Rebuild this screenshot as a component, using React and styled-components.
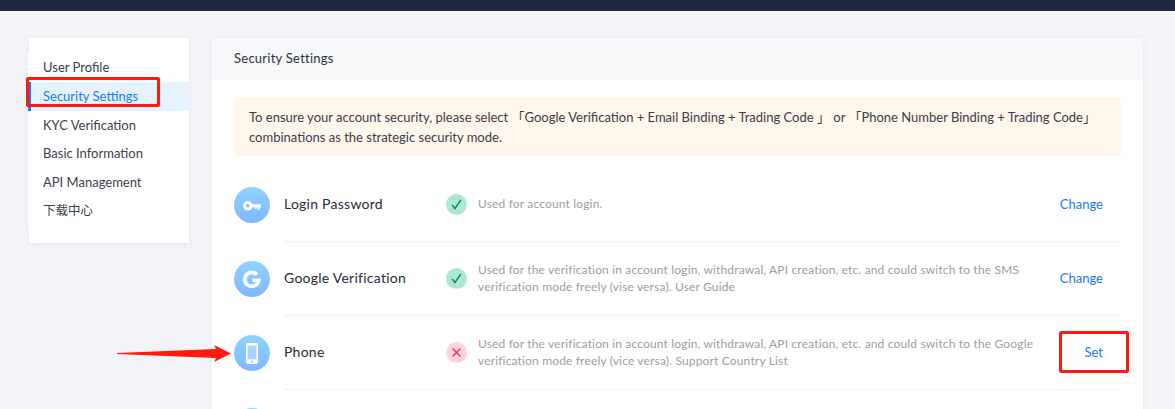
import React from 'react'
import styled, { createGlobalStyle, css } from 'styled-components'

const GlobalStyle = createGlobalStyle`
    html, body {
        margin: 0;
        height: 409px;
        overflow: hidden;
        background-color: #f3f4f8;
        font-family: Lato, "Noto Sans CJK SC", sans-serif;
    }
`

// row texts sit 1px above the badge and icon centre
const rowText = css`
    margin-bottom: 2px;
`

const Page = styled.div`
    position: relative;
    width: 1175px;
    height: 409px;
    overflow: hidden;
`
const TopBar = styled.div`
    height: 11px;
    background-color: #1f2640;
`
const Content = styled.div`
    display: flex;
    align-items: flex-start;
    gap: 23px;
    padding: 27px 32px 0 29px;
`
const Sidebar = styled.nav`
    width: 160px;
    height: 205px;
    box-sizing: border-box;
    flex-shrink: 0;
    padding-top: 15px;
    background-color: #fff;
    box-shadow: 0 1px 6px rgba(40, 50, 80, 0.07);
`
const NavItem = styled.div`
    height: 28.8px;
    line-height: 28.8px;
    margin-left: -1px;
    padding-left: 15px;
    font-size: ${p => p.$cjk ? '12.5px' : '13px'};
    color: ${p => p.$active ? '#1a7bf2' : '#3c3f4c'};
    background-color: ${p => p.$active ? '#e5f3ff' : '#fff'};
    box-shadow: ${p => p.$active ? 'inset 3px 0 0 #1a7bf2' : 'none'};
`
const Main = styled.main`
    flex: 1;
    background-color: #fff;
    border-radius: 4px 4px 0 0;
    box-shadow: 0 1px 6px rgba(40, 50, 80, 0.05);
`
const CardHeader = styled.div`
    height: 42px;
    line-height: 41px;
    padding-left: 22px;
    font-size: 13px;
    letter-spacing: 0.25px;
    color: #2b2f3d;
    background-color: #f7f8fa;
    border-radius: 4px 4px 0 0;
`
const CardBody = styled.div`
    padding: 17px 22px 0;
`
const Notice = styled.div`
    height: 59px;
    box-sizing: border-box;
    padding: 10px 15px;
    font-size: 13px;
    line-height: 20px;
    color: #3a3d49;
    background-color: #fff6ec;
    border-radius: 4px;
    margin-bottom: 12px;
`
const Row = styled.div`
    display: flex;
    align-items: center;
    height: 74px;
`
const NextRow = styled(Row)`
    margin-top: -1px;
`
const IconCircle = styled.div`
    width: 36px;
    height: 36px;
    flex-shrink: 0;
    display: flex;
    align-items: center;
    justify-content: center;
    border-radius: 50%;
    background: linear-gradient(180deg, #8fd3ff 0%, #7fb8ff 100%);
`
const RowMain = styled.div`
    flex: 1;
    height: 100%;
    margin-left: 14px;
    margin-right: 1px;
    display: flex;
    align-items: center;
    border-bottom: 1px solid #eeeff2;
    box-sizing: border-box;
`
const RowTitle = styled.div`
    ${rowText}
    width: 162px;
    flex-shrink: 0;
    font-size: 14px;
    letter-spacing: 0.25px;
    color: #262a38;
`
const StatusBadge = styled.div`
    width: 21px;
    height: 21px;
    flex-shrink: 0;
    display: flex;
    align-items: center;
    justify-content: center;
    border-radius: 50%;
    background-color: ${p => p.$ok ? '#ade9d2' : '#ffd3da'};
`
const Description = styled.div`
    ${rowText}
    width: 570px;
    flex-shrink: 0;
    margin-left: 11px;
    font-size: 12px;
    line-height: 17px;
    letter-spacing: 0.16px;
    color: #9b9da5;
`
const ActionLink = styled.a`
    ${rowText}
    flex: 1;
    text-align: right;
    padding-right: 17px;
    font-size: 13px;
    color: #1a7bf2;
`
const Highlight = styled.div`
    position: absolute;
    left: ${p => p.$x}px;
    top: ${p => p.$y}px;
    width: ${p => p.$w}px;
    height: ${p => p.$h}px;
    box-sizing: border-box;
    border: 3px solid #ff1a0e;
    border-radius: 2px;
`
const Arrow = styled.svg`
    position: absolute;
    left: 116px;
    top: 343px;
`

const KeyIcon = () => (
    <svg width="20" height="20" viewBox="0 0 20 20" fill="#fff">
        <path fillRule="evenodd" d="M5.8 6a4.8 4.8 0 1 1 0 9.6 4.8 4.8 0 0 1 0-9.6zm0 3a1.8 1.8 0 1 0 0 3.6 1.8 1.8 0 0 0 0-3.6z" />
        <path d="M9 9.2h10v3h-1.2v2.6h-2v-2.6h-1v1.6h-2v-1.6H9z" />
    </svg>
)
const GoogleIcon = () => (
    <svg width="20" height="20" viewBox="0 0 20 20" fill="none">
        <path d="M15 5.6A7 7 0 1 0 16.8 11.2H10.4" stroke="#fff" strokeWidth="3.6" />
    </svg>
)
const PhoneIcon = () => (
    <svg width="12" height="21" viewBox="0 0 12 21">
        <rect x="0" y="0" width="12" height="21" rx="2" fill="#fff" />
        <rect x="1.6" y="2.6" width="8.8" height="13.8" fill="#a6d3ff" />
        <circle cx="6" cy="18.6" r="1.1" fill="#8cc4ff" />
    </svg>
)
const CheckIcon = () => (
    <svg width="11" height="11" viewBox="0 0 11 11" fill="none">
        <path d="M1.2 6l2.7 3.6L9.8 1" stroke="#0c7f5c" strokeWidth="1.4" />
    </svg>
)
const CrossIcon = () => (
    <svg width="11" height="11" viewBox="0 0 11 11" fill="none">
        <path d="M1.5 1.5l8 8M9.5 1.5l-8 8" stroke="#e8364f" strokeWidth="1.4" />
    </svg>
)

const navItems = ['User Profile', 'Security Settings', 'KYC Verification', 'Basic Information', 'API Management', '下载中心']

const rows = [
    {
        title: 'Login Password',
        icon: <KeyIcon />,
        ok: true,
        desc: 'Used for account login.',
        action: 'Change',
    },
    {
        title: 'Google Verification',
        icon: <GoogleIcon />,
        ok: true,
        desc: 'Used for the verification in account login, withdrawal, API creation, etc. and could switch to the SMS verification mode freely (vise versa). User Guide',
        action: 'Change',
    },
    {
        title: 'Phone',
        icon: <PhoneIcon />,
        ok: false,
        desc: 'Used for the verification in account login, withdrawal, API creation, etc. and could switch to the Google verification mode freely (vice versa). Support Country List',
        action: 'Set',
    },
]

const App = () => (
    <Page>
        <GlobalStyle />
        <TopBar />
        <Content>
            <Sidebar>
                {navItems.map(item => (
                    <NavItem key={item} $active={item === 'Security Settings'} $cjk={item === '下载中心'}>{item}</NavItem>
                ))}
            </Sidebar>
            <Main>
                <CardHeader>Security Settings</CardHeader>
                <CardBody>
                    <Notice>
                        To ensure your account security, please select 「Google Verification + Email Binding + Trading Code 」 or 「Phone Number Binding + Trading Code」 combinations as the strategic security mode.
                    </Notice>
                    {rows.map(row => (
                        <Row key={row.title}>
                            <IconCircle>{row.icon}</IconCircle>
                            <RowMain>
                                <RowTitle>{row.title}</RowTitle>
                                <StatusBadge $ok={row.ok}>{row.ok ? <CheckIcon /> : <CrossIcon />}</StatusBadge>
                                <Description>{row.desc}</Description>
                                <ActionLink>{row.action}</ActionLink>
                            </RowMain>
                        </Row>
                    ))}
                    <NextRow>
                        <IconCircle />
                    </NextRow>
                </CardBody>
            </Main>
        </Content>
        <Highlight $x={26} $y={77} $w={134} $h={30} />
        <Highlight $x={1059} $y={331} $w={70} $h={42} />
        <Arrow width="116" height="20" viewBox="0 0 116 20">
            <path d="M1 9.9V10.9L100 15L98 19L115 10.5L98 2L100 6Z" fill="#ff1a0e" />
        </Arrow>
    </Page>
)

export default App
